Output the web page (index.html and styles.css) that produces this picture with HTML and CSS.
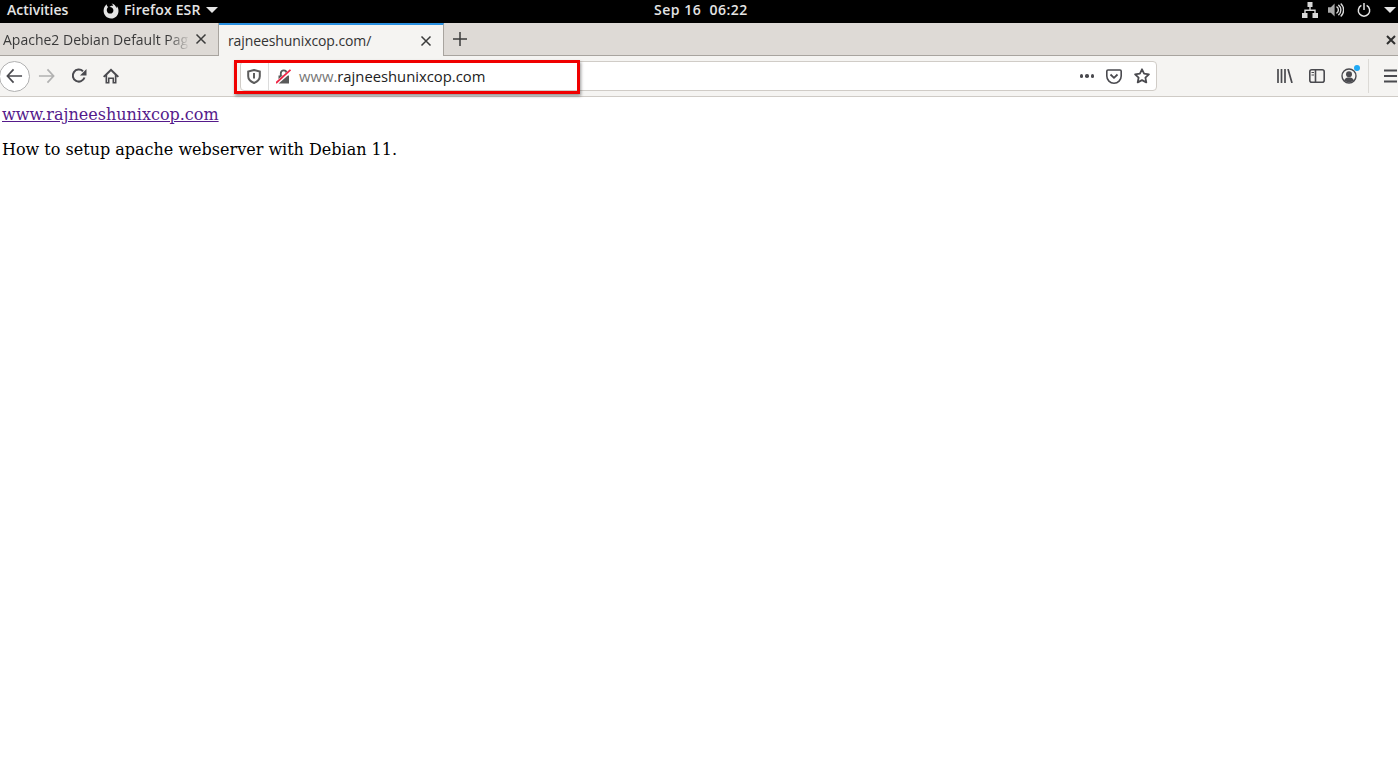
FILE: index.html
```html
<!DOCTYPE html>
<html lang="en">
<head>
    <meta charset="UTF-8">
    <meta name="viewport" content="width=device-width, initial-scale=1.0">
    <title>rajneeshunixcop.com/</title>
    <link rel="stylesheet" href="styles.css">
</head>
<body>
    <div class="top-bar">
        <div class="top-left">
            <span class="activities">Activities</span>
            <span class="app-menu">
                <svg class="app-icon" width="16" height="16" viewBox="0 0 16 16"><path d="M8.500 .6c.9.700 1.500 1.400 1.700 2.300-1.400-.5-3 .1-3.700 1.200 2.200-.2 3.900 1.300 3.900 3.300 0 1.800-1.400 3.200-3.200 3.200-2 0-3.400-1.500-3.400-3.400 0-1.300.6-2.400 1.500-3.100C4.200 3.500 3.700 2.700 3.800 1.300 1.900 2.700.6 5 .6 7.800c0 4.300 3.300 7.700 7.500 7.700s7.400-3.400 7.400-7.600c0-1.800-.6-3.300-1.600-4.600 0 .8-.2 1.400-.5 1.800C12.800 3 11 1 8.500 .6z" fill="#e4e4e4"/></svg>
                Firefox ESR
                <span class="caret"></span>
            </span>
        </div>
        <div class="clock">Sep 16&nbsp; 06:22</div>
        <div class="top-right">
            <svg class="network-icon" width="16" height="16" viewBox="0 0 16 16"><path d="M5.500 0h5v5h-5zM0 11h5.500v5H0zM10.500 11H16v5h-5.500zM7.300 5h1.400v2.500h5V11h-1.400V8.900H3.700V11H2.300V7.500h5z" fill="#d8d8d8"/></svg>
            <svg width="16" height="16" viewBox="0 0 17 16"><path d="M0 5h3l4-4v14l-4-4H0z" fill="#a8a8a8"/><path d="M9 4.500a4 4 0 0 1 0 7M11 2.500a7 7 0 0 1 0 11M13.500 1a9.500 9.500 0 0 1 0 14" fill="none" stroke="#d8d8d8" stroke-width="1.500"/></svg>
            <svg width="14" height="16" viewBox="0 0 16 16" class="power"><path d="M5 2.800a6.500 6.500 0 1 0 6 0" fill="none" stroke="#e4e4e4" stroke-width="1.700"/><path d="M8 0v8" stroke="#e4e4e4" stroke-width="1.700"/></svg>
            <span class="caret"></span>
        </div>
    </div>

    <div class="tab-strip">
        <div class="tab">
            <span class="tab-title">Apache2 Debian Default Pag</span>
            <svg class="tab-close" width="12" height="12" viewBox="0 0 12 12"><path d="M1.500 1.500l9 9M10.500 1.500l-9 9" stroke="#3b3b3b" stroke-width="1.500"/></svg>
        </div>
        <div class="tab tab-active">
            <span class="tab-title tab-title-full">rajneeshunixcop.com/</span>
            <svg class="tab-close" width="12" height="12" viewBox="0 0 12 12"><path d="M1.500 1.500l9 9M10.500 1.500l-9 9" stroke="#3b3b3b" stroke-width="1.500"/></svg>
        </div>
        <svg class="new-tab" width="14" height="14" viewBox="0 0 14 14"><path d="M7 0v14M0 7h14" stroke="#3b3b3b" stroke-width="1.500"/></svg>
        <svg class="window-close" width="10" height="10" viewBox="0 0 10 10"><path d="M1 1l8 8M9 1l-8 8" stroke="#2e2e2e" stroke-width="2"/></svg>
    </div>

    <div class="toolbar">
        <div class="nav-group">
            <div class="back-button">
                <svg width="17" height="16" viewBox="0 0 18 16"><path d="M8 1L1.500 8 8 15M1.500 8H17" fill="none" stroke="#4a4a4f" stroke-width="1.800"/></svg>
            </div>
            <svg class="nav-icon" width="17" height="16" viewBox="0 0 18 16"><path d="M10 1l6.500 7-6.500 7M16.500 8H1" fill="none" stroke="#b1b1b1" stroke-width="1.800"/></svg>
            <svg class="nav-icon" width="16" height="16" viewBox="0 0 16 16"><path d="M13.500 9.500A6 6 0 1 1 12 3.300" fill="none" stroke="#4a4a4f" stroke-width="2"/><path d="M15.500 1v6.500H9z" fill="#4a4a4f"/></svg>
            <svg class="nav-icon" width="16" height="16" viewBox="0 0 16 16"><path fill-rule="evenodd" d="M8 .5L0 8.300l1.300 1.300L2.500 8.500V15.500h4V11h3v4.500h4V8.500l1.200 1.100L16 8.300zM8 3.200l3.800 3.700v7H11V9.500H5v4.400h-.8v-7z" fill="#4a4a4f"/></svg>
        </div>
        <div class="url-bar">
            <div class="shield-box">
                <svg width="14" height="15" viewBox="0 0 14 15"><path d="M7 1l5.800 1.600v4.700c0 3.200-2.700 5.400-5.800 6.700C3.900 12.700 1.200 10.500 1.200 7.300V2.600z" fill="#fdfdfd" stroke="#5c5c5c" stroke-width="2"/><path d="M6 4h2v5.500H6z" fill="#5c5c5c"/></svg>
            </div>
            <svg class="lock-icon" width="15" height="15" viewBox="0 0 15 15"><path d="M2.500 6.500h10.500v8H2.500z" fill="#595959"/><path d="M4.800 7V4.300a2.900 2.900 0 0 1 5.800 0V7" fill="none" stroke="#595959" stroke-width="1.800"/><path d="M0 14.500L15 1.500" stroke="#fff" stroke-width="3.500"/><path d="M0 14L14.500 .8" stroke="#ee2545" stroke-width="1.800"/></svg>
            <span class="url-text"><span class="url-dim">www.</span>rajneeshunixcop.com</span>
            <div class="url-actions">
                <span class="dots"><i></i><i></i><i></i></span>
                <svg width="16" height="15" viewBox="0 0 16 15"><path d="M2 1h12a1.200 1.200 0 0 1 1.200 1.200V7A7.200 7.200 0 0 1 .8 7V2.200A1.200 1.200 0 0 1 2 1z" fill="none" stroke="#4a4a4f" stroke-width="1.600"/><path d="M4.500 5.500L8 8.800l3.500-3.300" fill="none" stroke="#4a4a4f" stroke-width="1.800"/></svg>
                <svg width="16" height="16" viewBox="0 0 16 16"><path d="M8 1.300l2.100 4.400 4.800.6-3.500 3.300.9 4.800L8 12.100l-4.300 2.300.9-4.800L1.100 6.300l4.800-.6z" fill="none" stroke="#4a4a4f" stroke-width="1.800" stroke-linejoin="round"/></svg>
            </div>
        </div>
        <div class="tool-group">
            <svg width="16" height="14" viewBox="0 0 16 14"><path d="M1 0v14M4.500 0v14M8 0v14M11 0l4 14" fill="none" stroke="#4a4a4f" stroke-width="1.700"/></svg>
            <svg width="16" height="14" viewBox="0 0 16 14"><rect x=".8" y=".8" width="14.400" height="12.400" rx="2" fill="none" stroke="#4a4a4f" stroke-width="1.600"/><path d="M6.500 1v12" stroke="#4a4a4f" stroke-width="1.600"/><path d="M2.500 3.500h2.500M2.500 6h2.500" stroke="#4a4a4f" stroke-width="1"/></svg>
            <div class="account">
                <svg width="16" height="16" viewBox="0 0 16 16"><circle cx="8" cy="8" r="7" fill="none" stroke="#4a4a4f" stroke-width="1.400"/><circle cx="8" cy="6.200" r="3" fill="#4a4a4f"/><path d="M3 12.500c1-2.500 3-3 5-3s4 .5 5 3c-1.300 1.200-3 1.800-5 1.800s-3.700-.6-5-1.800z" fill="#4a4a4f"/></svg>
                <span class="badge"></span>
            </div>
            <span class="tool-divider"></span>
            <svg width="13" height="14" viewBox="0 0 13 14"><path d="M0 1.500h13M0 7h13M0 12.500h13" stroke="#4a4a4f" stroke-width="1.800"/></svg>
        </div>
    </div>
    <div class="highlight"></div>

    <div class="page">
        <p class="page-line"><a href="#" class="visited">www.rajneeshunixcop.com</a></p>
        <p class="page-line">How to setup apache webserver with Debian 11.</p>
    </div>
</body>
</html>
```

FILE: styles.css
```css
html, body {
    margin: 0;
    padding: 0;
    height: 100%;
    overflow: hidden;
    background-color: white;
}
body {
    position: relative;
    font-family: "Open Sans", "Noto Sans", sans-serif;
}
svg {
    display: block;
    flex: none;
}
.top-bar {
    height: 23px;
    box-sizing: border-box;
    padding-bottom: 5px;
    background-color: black;
    color: #e4e4e4;
    font-size: 14px;
    font-weight: 600;
    display: grid;
    grid-template-columns: 1fr auto 1fr;
    align-items: center;
}
.top-left {
    display: flex;
    align-items: center;
    padding-left: 7px;
}
.activities {
    width: 96px;
}
.app-menu {
    display: flex;
    align-items: center;
    gap: 5px;
    letter-spacing: 0.15px;
}
.app-icon {
    margin-top: 2px;
}
.caret {
    display: inline-block;
    width: 0;
    height: 0;
    border-left: 6px solid transparent;
    border-right: 6px solid transparent;
    border-top: 6px solid #e4e4e4;
}
.clock {
    letter-spacing: 0.5px;
    padding-left: 4px;
}
.top-right {
    display: flex;
    align-items: center;
    justify-content: flex-end;
    padding-right: 2px;
    gap: 13px;
}
.network-icon {
    margin-right: -3px;
}
.tab-strip {
    height: 32px;
    background-color: #dedad6;
    display: flex;
    align-items: stretch;
    border-bottom: 1px solid #a8a49f;
    position: relative;
}
.tab {
    display: flex;
    align-items: center;
    box-sizing: border-box;
    width: 219px;
    padding-left: 3px;
    padding-right: 11px;
    font-size: 14px;
    color: #3a3a3a;
    border-right: 1px solid #a8a49f;
}
.tab-title {
    flex: 1;
    white-space: nowrap;
    -webkit-mask-image: linear-gradient(to right, black 165px, transparent 187px);
    mask-image: linear-gradient(to right, black 165px, transparent 187px);
}
.tab-title-full {
    -webkit-mask-image: none;
    mask-image: none;
    letter-spacing: -0.1px;
}
.tab-active {
    width: 225px;
    height: 33px;
    padding-left: 9px;
    background-color: #f5f4f2;
    border-top: 2px solid #2a90e0;
    border-right: 1px solid #a8a49f;
    color: #333;
}
.new-tab {
    align-self: center;
    margin-left: 9px;
}
.window-close {
    position: absolute;
    right: 2px;
    top: 12px;
}
.toolbar {
    height: 41px;
    box-sizing: border-box;
    background-color: #f5f4f2;
    border-bottom: 1px solid #cfcbc6;
    display: flex;
    align-items: center;
}
.nav-group {
    display: flex;
    align-items: center;
    width: 240px;
    flex: none;
}
.back-button {
    box-sizing: border-box;
    width: 31px;
    height: 31px;
    margin-left: -1px;
    border: 1px solid #b1b1b1;
    border-radius: 50%;
    background-color: white;
    display: flex;
    align-items: center;
    justify-content: center;
}
.nav-icon {
    margin-left: 8px;
}
.nav-icon + .nav-icon {
    margin-left: 16px;
}
.url-bar {
    box-sizing: border-box;
    width: 917px;
    height: 30px;
    background-color: white;
    border: 1px solid #d0ccc7;
    border-radius: 4px;
    display: flex;
    align-items: center;
    flex: none;
}
.shield-box {
    width: 28px;
    height: 100%;
    box-sizing: border-box;
    border-right: 1px solid #dcdcdc;
    display: flex;
    align-items: center;
    justify-content: center;
    padding-right: 2px;
}
.lock-icon {
    margin-left: 7px;
}
.url-text {
    margin-left: 8px;
    font-size: 14.800px;
    color: #222;
    white-space: nowrap;
}
.url-dim {
    color: #777;
}
.url-actions {
    margin-left: auto;
    display: flex;
    align-items: center;
    gap: 12px;
    padding-right: 6px;
}
.dots {
    display: flex;
    gap: 2px;
}
.dots i {
    display: block;
    width: 3.500px;
    height: 3.500px;
    border-radius: 50%;
    background-color: #4a4a4f;
}
.tool-group {
    display: flex;
    align-items: center;
    gap: 16px;
    width: 241px;
    box-sizing: border-box;
    padding-left: 120px;
    flex: none;
}
.account {
    position: relative;
}
.badge {
    position: absolute;
    top: -3px;
    right: -3px;
    width: 6px;
    height: 6px;
    border-radius: 50%;
    background-color: #1fa9f5;
}
.tool-divider {
    width: 1px;
    height: 34px;
    background-color: #dcdad6;
    margin-left: -5px;
    margin-right: -1px;
}
.highlight {
    position: absolute;
    left: 234px;
    top: 60px;
    width: 340px;
    height: 28px;
    border: 3px solid #f00000;
    box-shadow: 1px 2px 3px rgba(0, 0, 0, 0.4);
}
.page {
    font-family: "DejaVu Serif", serif;
    font-size: 16px;
    color: black;
    padding: 8px 2px;
}
.page-line {
    margin: 0 0 16px;
    line-height: 19px;
}
.visited {
    color: #551a8b;
}
```
